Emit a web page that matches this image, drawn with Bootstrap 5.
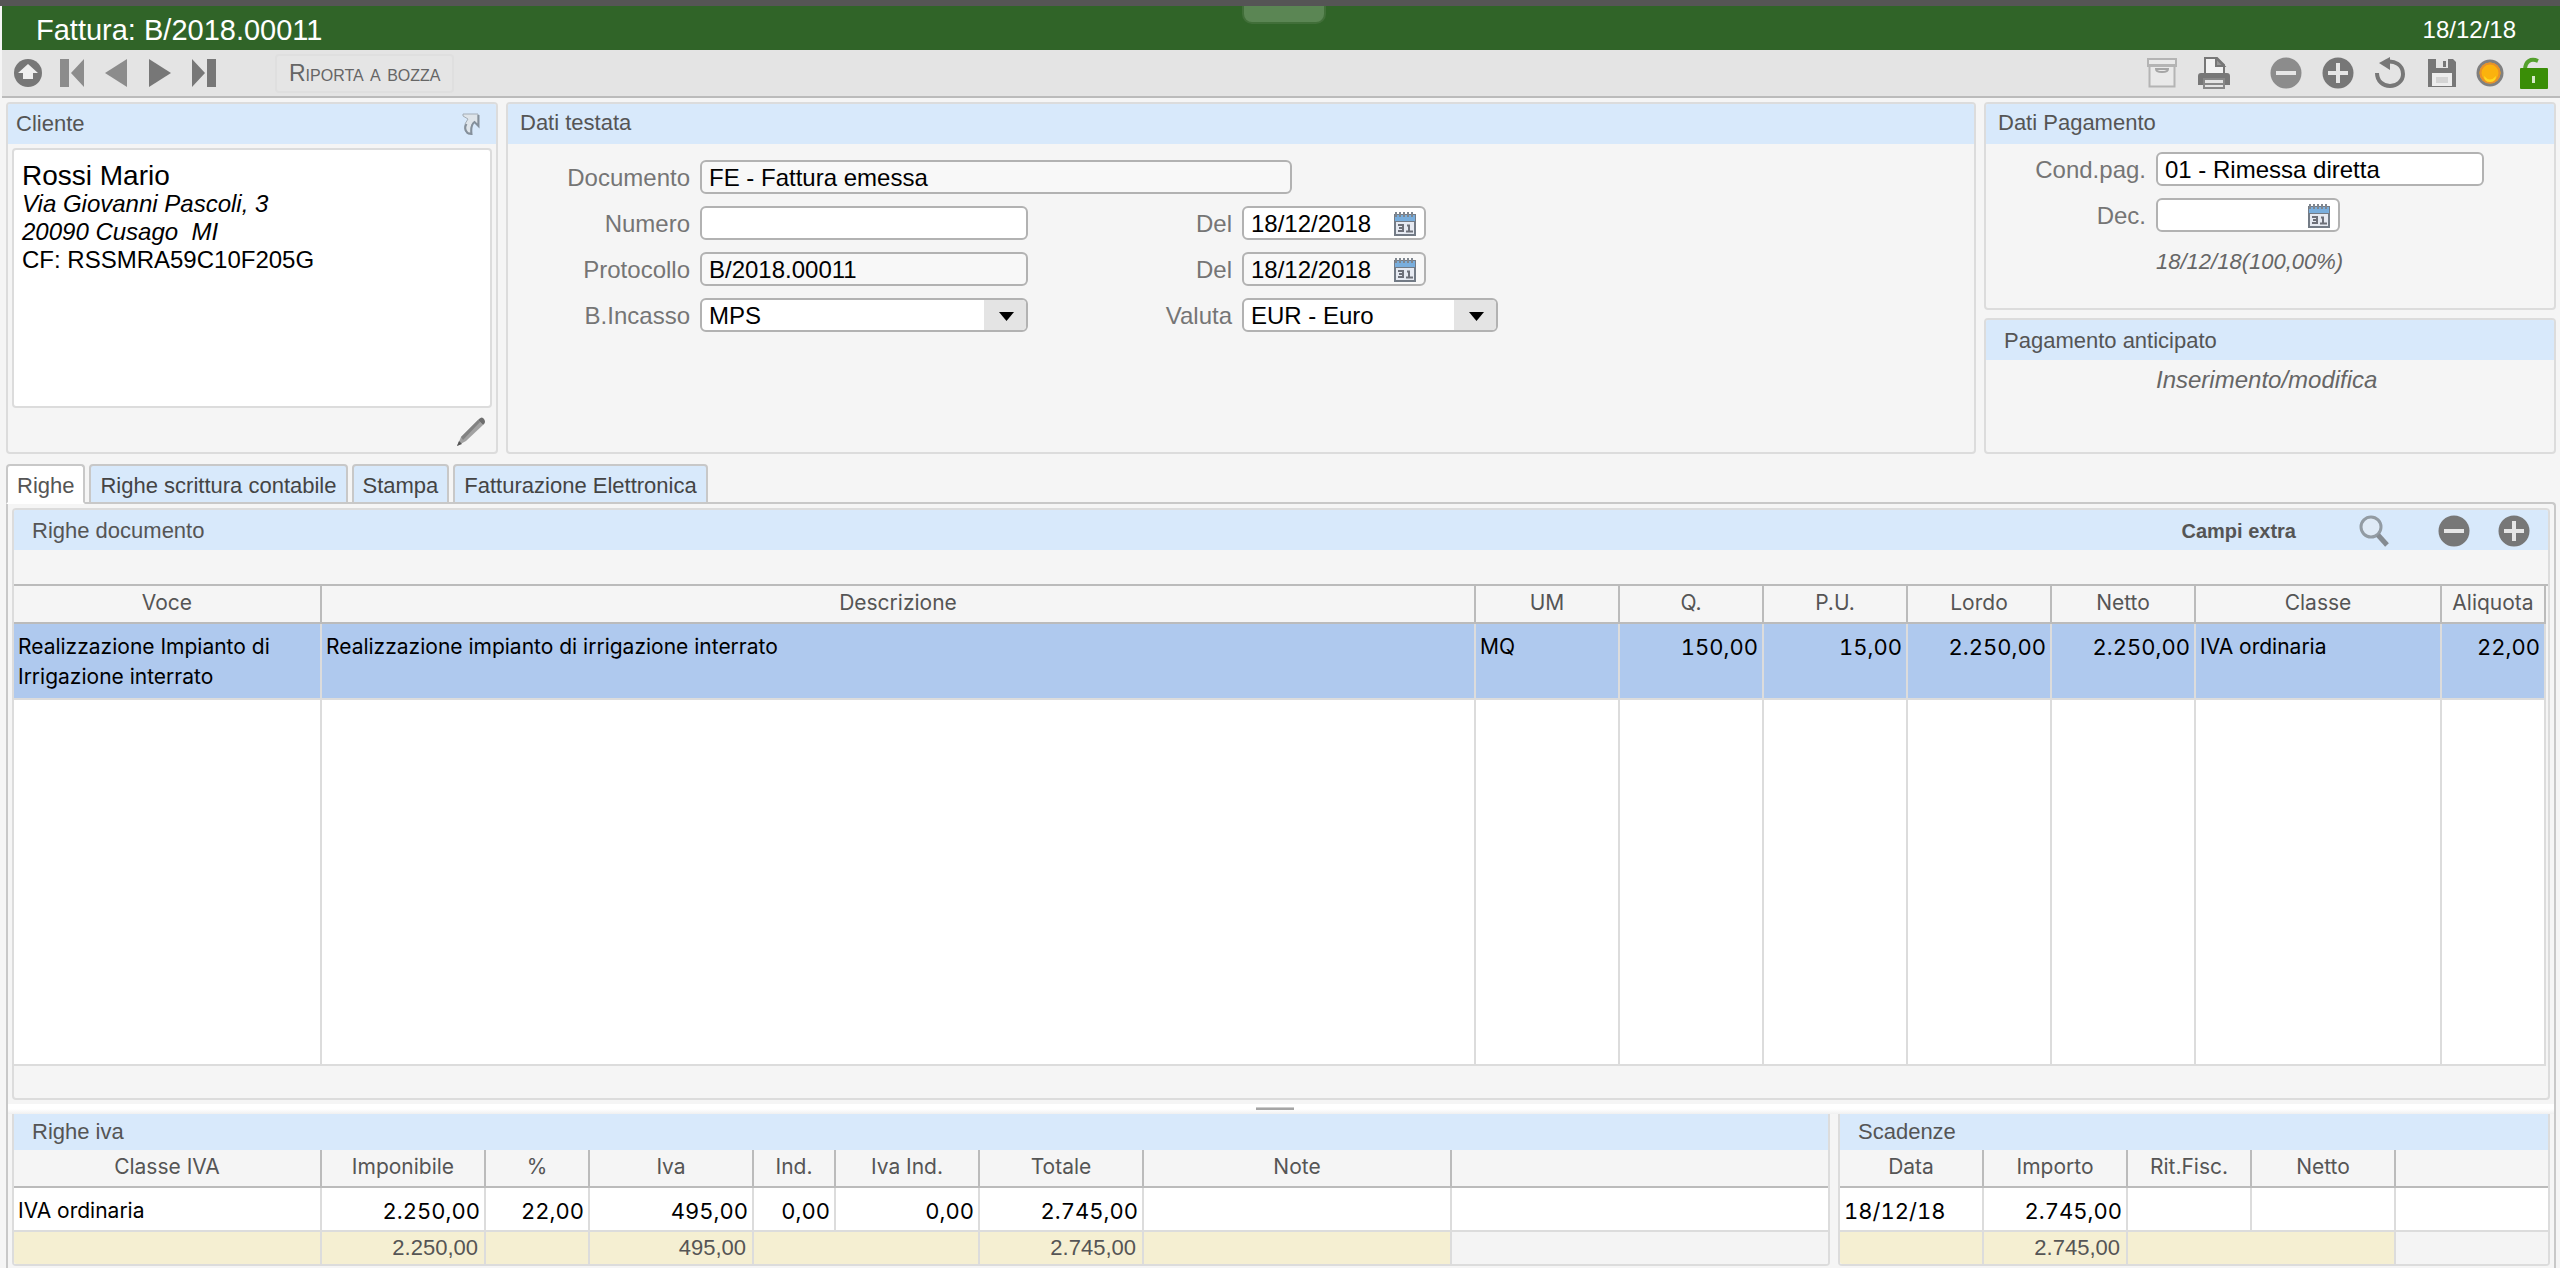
<!DOCTYPE html>
<html lang="it">
<head>
<meta charset="utf-8">
<meta name="viewport" content="width=device-width, initial-scale=1">
<title>Fattura: B/2018.00011</title>
<link href="https://cdn.jsdelivr.net/npm/bootstrap@5.3.0/dist/css/bootstrap.min.css" rel="stylesheet">
<style>
body{font-family:"Liberation Sans",Arial,sans-serif;font-size:24px;line-height:28px;color:#000;background:#f5f5f5}
svg{display:block;flex:none}
.strip{height:6px;background:#555}
.titlebar{height:44px;margin-left:2px;padding:3px 44px 0 34px;background:#306428;color:#fff;position:relative}
.titlebar h1{font-size:29px;line-height:32px;font-weight:400}
.pull{position:absolute;left:50%;top:0;width:84px;height:18px;margin-left:-39px;background:#5b8654;border:2px solid #416f39;border-top:0;border-radius:0 0 10px 10px}
.tools{height:48px;margin-left:2px;padding:0 4px;background:#e4e4e4;border-bottom:2px solid #bbb}
.ico{width:44px;height:40px;padding:0;border:0;background:none;display:flex;align-items:center;justify-content:center}
.ico-w{width:52px}
.ico-s{width:32px;height:32px}
.draft{margin-left:49px;height:39px;padding:0 12px;border:2px solid #dfdfdf;border-radius:4px;background:#e5e5e5;font-size:23px;font-variant:small-caps;color:#666}
.work{padding:4px 4px 0 6px}
.panel{border:2px solid #dcdcdc;border-radius:4px;background:#f5f5f5;overflow:hidden}
.panel-head{height:40px;background:#d8e9fb;color:#555}
.panel-head h2{font-size:22px;line-height:28px;font-weight:400}
.head-up{padding-bottom:2px}
.head-in{padding-left:18px;padding-right:18px;padding-top:1px}
.top-row{height:352px;gap:8px}
.col-client{width:492px;flex:none}
.col-pay{width:572px;flex:none;gap:8px}
.pay-one{height:208px;flex:none}
.address{margin:4px 4px 0 4px;height:260px;padding:12px 8px;border:2px solid #dcdcdc;border-radius:4px;background:#fff}
.address strong{font-size:28px;font-weight:400;display:block}
.fields{gap:12px}
.fline{gap:10px;height:34px}
.fline label{text-align:right;color:#757575;flex:none;padding-top:2px}
.l-a{width:182px}.l-b{width:194px}.l-c{width:160px}
.fbox{height:34px;padding:1px 7px 0;border:2px solid #b2b2b2;border-radius:6px;background:#fff;color:#000;font-size:24px;line-height:29px;flex:none}
.fbox:read-only:not(select){background:#f8f8f8}
.w-doc{width:592px}.w-txt{width:328px}.w-date{width:184px}.w-cur{width:256px}
.pick{position:relative;flex:none}
.pick .fbox{display:block;appearance:none}
.pick button{position:absolute;right:9px;top:6px;border:0;padding:0;background:none}
.drop::after{content:"";position:absolute;right:2px;top:2px;width:42px;height:30px;border-radius:0 4px 4px 0;background:#e4e4e4;pointer-events:none}
.drop::before{content:"";position:absolute;z-index:1;right:14px;top:14px;width:15px;height:9px;background:#000;clip-path:polygon(0 0,100% 0,50% 100%);pointer-events:none}
.note-it{font-style:italic;color:#666;margin-left:170px}
.note-s{font-size:22px}
.note-l{padding-top:6px}
.tabs{gap:4px;padding-top:10px;position:relative;z-index:1;margin-bottom:-2px}
.tabs .nav-link{height:40px;padding:0 9px;border:2px solid #c8c8c8;border-radius:4px 4px 0 0;background:#d8e9fb;color:#444;font-size:22px;line-height:39px}
.tabs .nav-link.active{background:#fff;border-bottom-color:#fff;color:#555}
.tabbody{border:2px solid #c8c8c8;border-bottom:0;border-top-right-radius:4px;min-height:0}
.extra{font-size:20px;font-weight:700;color:#555;text-decoration:none;margin-right:62px}
.grid-t{font-family:Inter,"Noto Sans",sans-serif;font-size:21px;line-height:30px;table-layout:fixed;border-collapse:separate;border-spacing:0;width:100%;background:#fff}
.grid-t th{height:38px;padding:0 4px 2px;font-weight:400;text-align:center;vertical-align:middle;color:#555;background:#f5f5f5;border-right:2px solid #bbb;border-bottom:2px solid #bbb;white-space:nowrap}
.grid-t td{padding:8px 4px 4px;vertical-align:top;border-right:2px solid #dcdcdc;border-bottom:2px solid #dcdcdc}
.grid-t .figure-cell,.grid-t tbody .text-end{font-size:22px;font-variant-numeric:tabular-nums}
.grid-t .sel td{height:76px;background:#afc9ee}
.grid-t .filler td{padding:0}
.main-t{width:calc(100% - 2px);height:100%}
.main-wrap{flex:1 1 0;min-height:0;border-top:2px solid #bbb;margin-top:34px}
.main-foot{height:32px;flex:none}
.split{height:14px;margin:0 -4px;flex:none;padding:7px 12px 0 0;background:linear-gradient(#f5f5f5 4px,#fff 4px,#fff 9px,#f0f0f0)}
.split span{display:block;width:38px;height:3px;margin:0 auto;background:#a5a5a5;border-top:1px solid #ccc}
.lower{gap:8px;padding-bottom:2px;flex:none}
.lower .panel{border-top:0;border-radius:0 0 4px 4px}
.lower .panel-head{height:36px;padding-top:0}
.panel-due{width:712px;flex:none}
.grid-t tr>:last-child.open-end{border-right:0}
.grid-t tfoot td{height:32px;padding:0 6px;vertical-align:middle;background:#f5efd2;color:#555;font-family:"Liberation Sans",Arial,sans-serif;font-size:22px}
.grid-t tfoot td.open-end{background:#f4f4f4}
</style>
<script src="https://cdn.jsdelivr.net/npm/bootstrap@5.3.0/dist/js/bootstrap.bundle.min.js"></script>
</head>
<body>
<svg width="0" height="0" class="position-absolute" aria-hidden="true">
<symbol id="i-cal" viewBox="0 0 24 24"><rect x="1" y="2" width="22" height="22" fill="#737b86"/><rect x="2" y="3" width="20" height="6" fill="#79aedd"/><rect x="3" y="10" width="18" height="12" fill="#e6eaf2"/><path d="M3 0v5M7 0v5M11 0v5M15 0v5M19 0v5" stroke="#7f868f" stroke-width="2"/><path d="M5 13h5v6h-5M6 16h4M14 13.500h2v6M13 19.500h7" fill="none" stroke="#6d7079" stroke-width="2"/></symbol>
<symbol id="i-plus" viewBox="0 0 32 32"><circle cx="16" cy="16" r="15.500" fill="#777"/><path d="M16 6v20M6 16h20" stroke="#e6e6e6" stroke-width="4"/></symbol>
<symbol id="i-minus" viewBox="0 0 32 32"><circle cx="16" cy="16" r="15.500" fill="currentColor"/><path d="M6 16h20" stroke="#e6e6e6" stroke-width="4"/></symbol>
</svg>
<div class="d-flex flex-column vh-100 overflow-hidden">
<div class="strip flex-shrink-0"></div>
<header class="titlebar d-flex align-items-center justify-content-between flex-shrink-0">
  <h1 class="m-0">Fattura: B/2018.00011</h1><span class="pull"></span><span>18/12/18</span>
</header>
<div class="tools d-flex align-items-center justify-content-between flex-shrink-0">
  <div class="d-flex align-items-center">
    <button class="ico" aria-label="Su"><svg width="28" height="28" viewBox="0 0 28 28"><circle cx="14" cy="14" r="14" fill="#777"/><path d="M14 5l10 9h-5v6h-10v-6h-5z" fill="#efefef"/></svg></button>
    <button class="ico" aria-label="Primo"><svg width="24" height="28" viewBox="0 0 24 28"><path d="M0 0h9v28h-9zM24 0v28L11 14z" fill="#8c8c8c"/></svg></button>
    <button class="ico" aria-label="Precedente"><svg width="22" height="28" viewBox="0 0 22 28"><path d="M22 0v28L0 14z" fill="#8c8c8c"/></svg></button>
    <button class="ico" aria-label="Successivo"><svg width="22" height="28" viewBox="0 0 22 28"><path d="M0 0v28l22-14z" fill="#777"/></svg></button>
    <button class="ico" aria-label="Ultimo"><svg width="24" height="28" viewBox="0 0 24 28"><path d="M15 0h9v28h-9zM0 0v28l13-14z" fill="#777"/></svg></button>
    <button class="draft">Riporta a bozza</button>
  </div>
  <div class="d-flex align-items-center">
    <button class="ico ico-w" aria-label="Archivia"><svg width="30" height="30" viewBox="0 0 30 30"><path d="M1 1h28v7H1zM2.500 8h25v20.500h-25z" fill="#e9e9e9" stroke="#b4b4b4" stroke-width="2"/><path d="M1 7.500h28" stroke="#b4b4b4" stroke-width="3"/><path d="M9 11c0 4 12 4 12 0z" fill="none" stroke="#a5a5a5" stroke-width="2"/></svg></button>
    <button class="ico ico-w me-3" aria-label="Stampa"><svg width="32" height="32" viewBox="0 0 32 32"><path d="M7 17V1h12l7 7v9" fill="#f2f2f2" stroke="#777" stroke-width="2"/><path d="M18 1v8h8z" fill="#999" stroke="#777" stroke-width="2"/><path d="M3 16h26q3 0 3 3v9h-5v-5H5v5H0v-9q0-3 3-3z" fill="#777"/><path d="M6 22h20v9H6z" fill="#e4e4e4" stroke="#888" stroke-width="2"/><path d="M6 27h20" stroke="#888" stroke-width="2"/></svg></button>
    <button class="ico ico-w ms-1" style="color:#8c8c8c" aria-label="Elimina"><svg width="32" height="32"><use href="#i-minus"/></svg></button>
    <button class="ico ico-w" aria-label="Nuovo"><svg width="32" height="32"><use href="#i-plus"/></svg></button>
    <button class="ico ico-w" aria-label="Annulla"><svg width="30" height="32" viewBox="0 0 30 32"><path d="M10 6c10-2 18 3 18 12 0 7-6 12-13 12S2 25 2 17" transform="translate(0 -1)" fill="none" stroke="#777" stroke-width="4"/><path d="M4 6l11-6v13z" fill="#777"/></svg></button>
    <button class="ico ico-w" aria-label="Salva"><svg width="28" height="28" viewBox="0 0 28 28"><path d="M0 0h25l3 3v25H0z" fill="#777"/><path d="M8 0h12v9H8z" fill="#e4e4e4"/><path d="M15 2h3v6h-3z" fill="#777"/><path d="M4 14h20v13H4z" fill="#ededed"/><path d="M8 18h12v6H8z" fill="#d4d4d4"/></svg></button>
    <button class="ico" aria-label="Stato"><svg width="28" height="28" viewBox="0 0 28 28"><circle cx="14" cy="14" r="12" fill="#fbb20d" stroke="#808080" stroke-width="3"/><circle cx="14" cy="14" r="9.500" fill="none" stroke="#e8902a" stroke-width="2"/><path d="M8 17q6 7 12 0 0 6-6 6t-6-6z" fill="#ffd820"/></svg></button>
    <button class="ico" aria-label="Sblocca"><svg width="28" height="32" viewBox="0 0 28 32"><path d="M5 13C5 4 11 1 18 4" fill="none" stroke="#54a02d" stroke-width="4"/><rect y="11" width="28" height="21" rx="1" fill="#3a8e07"/><path d="M12 19h3v7h-3z" fill="#d6e8c9"/></svg></button>
  </div>
</div>
<main class="work d-flex flex-column flex-grow-1">
  <div class="top-row d-flex flex-shrink-0">
    <section class="panel col-client">
      <div class="panel-head d-flex align-items-center justify-content-between ps-2 pe-3"><h2 class="m-0">Cliente</h2>
        <button class="border-0 bg-transparent p-0" aria-label="Apri cliente"><svg width="18" height="22" viewBox="0 0 18 22"><path d="M1 1h15v12l-4-4q-4 3-3 12H6Q-1 15 6 6L1 3z" fill="#dfe5ea" stroke="#a4adb6" stroke-width="1"/><path d="M16.500 2v11l-4-4q-4 3-3 12l-4-1q-4-4-1-9" fill="none" stroke="#85909b" stroke-width="2"/></svg></button></div>
      <div class="address"><strong>Rossi Mario</strong><em>Via Giovanni Pascoli, 3</em><br><em>20090 Cusago&nbsp; MI</em><br>CF: RSSMRA59C10F205G</div>
      <div class="d-flex justify-content-end pt-2 pe-2"><button class="border-0 bg-transparent p-0" aria-label="Modifica"><svg width="32" height="32" viewBox="0 0 32 32"><path d="M1 30l4-9L22 4l5 5L10 25z" fill="#a2a2a2"/><path d="M5 21L22 4l2 2L7 24z" fill="#828282"/><path d="M23 3q3-3 5 0t0 5l-1 1-5-5z" fill="#6e6e6e"/><path d="M1 30l2-5 3 3z" fill="#555"/></svg></button></div>
    </section>
    <section class="panel flex-grow-1">
      <div class="panel-head head-up d-flex align-items-center"><h2 class="m-0 ms-2 ps-1">Dati testata</h2></div>
      <div class="fields d-flex flex-column pt-3">
        <div class="fline d-flex align-items-center"><label class="l-a" for="doc">Documento</label><input class="fbox w-doc" id="doc" value="FE - Fattura emessa" readonly></div>
        <div class="fline d-flex align-items-center"><label class="l-a" for="num">Numero</label><input class="fbox w-txt" id="num"><label class="l-b" for="d1">Del</label><div class="pick"><input class="fbox w-date" id="d1" value="18/12/2018"><button aria-label="Calendario"><svg width="24" height="24"><use href="#i-cal"/></svg></button></div></div>
        <div class="fline d-flex align-items-center"><label class="l-a" for="prot">Protocollo</label><input class="fbox w-txt" id="prot" value="B/2018.00011" readonly><label class="l-b" for="d2">Del</label><div class="pick"><input class="fbox w-date" id="d2" value="18/12/2018" readonly><button aria-label="Calendario"><svg width="24" height="24"><use href="#i-cal"/></svg></button></div></div>
        <div class="fline d-flex align-items-center"><label class="l-a" for="inc">B.Incasso</label><div class="pick drop"><select class="fbox w-txt" id="inc"><option>MPS</option></select></div><label class="l-b" for="val">Valuta</label><div class="pick drop"><select class="fbox w-cur" id="val"><option>EUR - Euro</option></select></div></div>
      </div>
    </section>
    <div class="col-pay d-flex flex-column">
      <section class="panel pay-one">
        <div class="panel-head head-up d-flex align-items-center"><h2 class="m-0 ms-2 ps-1">Dati Pagamento</h2></div>
        <div class="fields d-flex flex-column pt-2">
          <div class="fline d-flex align-items-center"><label class="l-c" for="cond">Cond.pag.</label><input class="fbox w-txt" id="cond" value="01 - Rimessa diretta"></div>
          <div class="fline d-flex align-items-center"><label class="l-c" for="dec">Dec.</label><div class="pick"><input class="fbox w-date" id="dec"><button aria-label="Calendario"><svg width="24" height="24"><use href="#i-cal"/></svg></button></div></div>
          <div class="note-it note-s pt-1">18/12/18(100,00%)</div>
        </div>
      </section>
      <section class="panel flex-grow-1">
        <div class="panel-head head-in d-flex align-items-center"><h2 class="m-0">Pagamento anticipato</h2></div>
        <div class="note-it note-l">Inserimento/modifica</div>
      </section>
    </div>
  </div>
  <nav class="tabs nav flex-shrink-0">
    <a class="nav-link active" href="#">Righe</a><a class="nav-link" href="#">Righe scrittura contabile</a><a class="nav-link" href="#">Stampa</a><a class="nav-link" href="#">Fatturazione Elettronica</a>
  </nav>
  <div class="tabbody d-flex flex-column flex-grow-1 p-1 pb-0">
    <section class="panel d-flex flex-column flex-grow-1">
      <div class="panel-head head-in d-flex align-items-center flex-shrink-0"><h2 class="m-0 me-auto">Righe documento</h2>
        <a class="extra" href="#">Campi extra</a>
        <button class="ico ico-s me-5" aria-label="Cerca"><svg width="32" height="32" viewBox="0 0 32 32"><circle cx="13" cy="12" r="10" fill="#dfeaf6" stroke="#929ba3" stroke-width="3"/><path d="M20 20l9 10" stroke="#858b91" stroke-width="5"/></svg></button>
        <button class="ico ico-s me-4" style="color:#777" aria-label="Togli riga"><svg width="32" height="32"><use href="#i-minus"/></svg></button>
        <button class="ico ico-s ms-1" aria-label="Aggiungi riga"><svg width="32" height="32"><use href="#i-plus"/></svg></button>
      </div>
      <div class="main-wrap">
        <table class="grid-t main-t">
          <colgroup><col width="308"><col><col width="144"><col width="144"><col width="144"><col width="144"><col width="144"><col width="246"><col width="104"></colgroup>
          <thead><tr><th>Voce</th><th>Descrizione</th><th>UM</th><th>Q.</th><th>P.U.</th><th>Lordo</th><th>Netto</th><th>Classe</th><th>Aliquota</th></tr></thead>
          <tbody>
            <tr class="sel"><td>Realizzazione Impianto di Irrigazione interrato</td><td>Realizzazione impianto di irrigazione interrato</td><td>MQ</td><td class="text-end">150,00</td><td class="text-end">15,00</td><td class="text-end">2.250,00</td><td class="text-end">2.250,00</td><td>IVA ordinaria</td><td class="text-end">22,00</td></tr>
            <tr class="filler h-100"><td></td><td></td><td></td><td></td><td></td><td></td><td></td><td></td><td></td></tr>
          </tbody>
        </table>
      </div>
      <div class="main-foot"></div>
    </section>
    <div class="split"><span></span></div>
    <div class="lower d-flex">
      <section class="panel flex-grow-1">
        <div class="panel-head head-in d-flex align-items-center"><h2 class="m-0">Righe iva</h2></div>
        <table class="grid-t">
          <colgroup><col width="308"><col width="164"><col width="104"><col width="164"><col width="82"><col width="144"><col width="164"><col width="308"><col></colgroup>
          <thead><tr><th>Classe IVA</th><th>Imponibile</th><th>%</th><th>Iva</th><th>Ind.</th><th>Iva Ind.</th><th>Totale</th><th>Note</th><th class="open-end"></th></tr></thead>
          <tbody><tr><td>IVA ordinaria</td><td class="text-end">2.250,00</td><td class="text-end">22,00</td><td class="text-end">495,00</td><td class="text-end">0,00</td><td class="text-end">0,00</td><td class="text-end">2.745,00</td><td></td><td class="open-end"></td></tr></tbody>
          <tfoot><tr><td class="border-bottom-0"></td><td class="text-end border-bottom-0">2.250,00</td><td class="border-bottom-0"></td><td class="text-end border-bottom-0">495,00</td><td colspan="2" class="border-bottom-0"></td><td class="text-end border-bottom-0">2.745,00</td><td class="border-bottom-0"></td><td class="open-end border-bottom-0"></td></tr></tfoot>
        </table>
      </section>
      <section class="panel panel-due">
        <div class="panel-head head-in d-flex align-items-center"><h2 class="m-0">Scadenze</h2></div>
        <table class="grid-t">
          <colgroup><col width="144"><col width="144"><col width="124"><col width="144"><col></colgroup>
          <thead><tr><th>Data</th><th>Importo</th><th>Rit.Fisc.</th><th>Netto</th><th class="open-end"></th></tr></thead>
          <tbody><tr><td class="figure-cell">18/12/18</td><td class="text-end">2.745,00</td><td></td><td></td><td class="open-end"></td></tr></tbody>
          <tfoot><tr><td class="border-bottom-0"></td><td class="text-end border-bottom-0">2.745,00</td><td colspan="2" class="border-bottom-0"></td><td class="open-end border-bottom-0"></td></tr></tfoot>
        </table>
      </section>
    </div>
  </div>
</main>
</div>
</body>
</html>
